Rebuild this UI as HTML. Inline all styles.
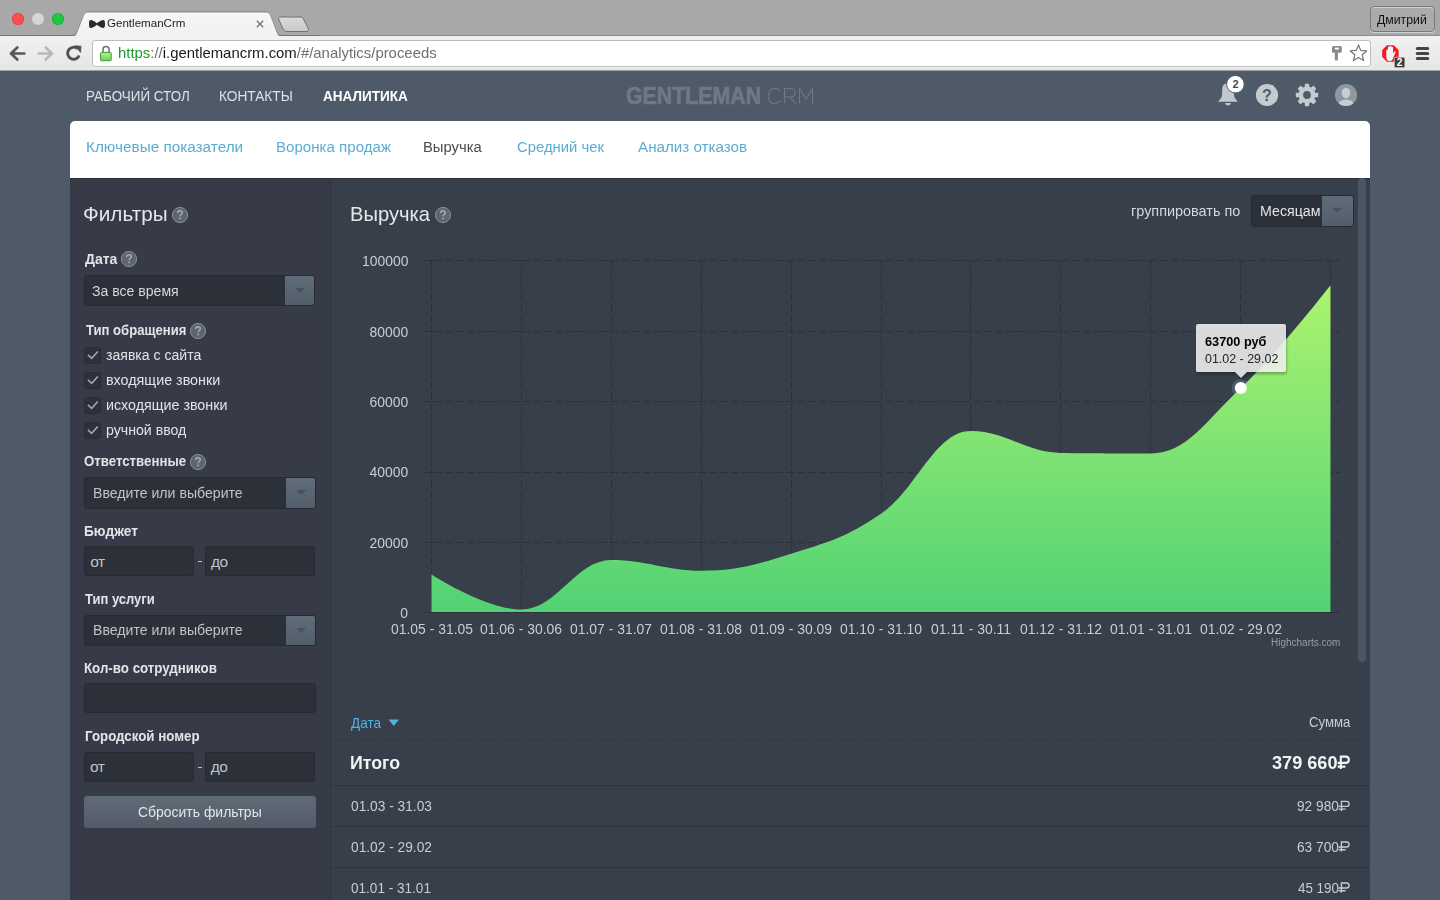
<!DOCTYPE html>
<html><head><meta charset="utf-8"><title>GentlemanCrm</title>
<style>
*{margin:0;padding:0;box-sizing:border-box}
html,body{width:1440px;height:900px;overflow:hidden;background:#4e5a68;font-family:"Liberation Sans",sans-serif}
.t{position:absolute;white-space:nowrap;line-height:1}
.b{position:absolute}
.inp{position:absolute;background:#2b3039;border:1px solid #262b33;border-radius:3px}
.ddb{position:absolute;top:0;right:0;width:29px;height:100%;background:linear-gradient(#616c79,#535e6b);border-radius:0 2px 2px 0}
.ddb:after{content:"";position:absolute;left:9.5px;top:12px;border-left:5px solid transparent;border-right:5px solid transparent;border-top:5.5px solid #48505b}
.q{position:absolute;width:16px;height:16px;border-radius:50%;background:#6b727c;border:1px solid #7d838c}
.q:after{content:"?";position:absolute;left:0;top:1px;width:14px;text-align:center;font:bold 11px/1 "Liberation Sans",sans-serif;color:#aeb2b8}
.cb{position:absolute;left:84px;width:16.5px;height:16.5px;background:#2c313a;border:1px solid #292e36;border-radius:3px}
.row{position:absolute;left:331px;width:1039px;height:1px;background:#30363f}
</style></head><body>
<div class="b" style="left:0;top:0;width:1440px;height:36px;background:#a8a8a8;border-bottom:1px solid #8c8c8c"></div>
<div class="b" style="left:0;top:36px;width:1440px;height:35px;background:linear-gradient(#f1f1f1,#e6e6e6);border-bottom:1px solid #a3a3a3"></div>
<svg class="b" style="left:0;top:0" width="320" height="37">
<defs><linearGradient id="tg" x1="0" y1="0" x2="0" y2="1"><stop offset="0" stop-color="#f6f6f6"/><stop offset="1" stop-color="#f1f1f1"/></linearGradient>
<linearGradient id="ng" x1="0" y1="0" x2="0" y2="1"><stop offset="0" stop-color="#dadada"/><stop offset="1" stop-color="#c9c9c9"/></linearGradient></defs>
<path d="M0,35.5 L71,35.5 C75,35.5 76,34 77,32.5 L84,15 C85,13 86,12 89,12 L265,12 C268,12 269,13 270,15 L277,32.5 C278,34 279,35.5 283,35.5 L320,35.5" fill="none" stroke="#767676" stroke-width="1"/>
<path d="M71,37 C75,37 76,35 77,33 L84,15 C85,13 86,12.5 89,12.5 L265,12.5 C268,12.5 269,13 270,15 L277,33 C278,35 279,37 283,37 Z" fill="url(#tg)"/>

<path d="M280.5,17 L300,17 C302,17 303,18 304,20 L308,28 C309,30.5 308,31.5 306,31.5 L287,31.5 C285,31.5 284,30.5 283,29 L279,20 C278,18 279,17 280.5,17 Z" fill="url(#ng)" stroke="#707070" stroke-width="1"/>
<g fill="#2a2a2a"><path d="M97,23.2 C95,21.6 92.3,20 90.6,20 C89.3,20 89,22 89,24 C89,26 89.3,28 90.6,28 C92.3,28 95,26.4 97,24.8 Z M97,23.2 C99,21.6 101.7,20 103.4,20 C104.7,20 105,22 105,24 C105,26 104.7,28 103.4,28 C101.7,28 99,26.4 97,24.8 Z"/></g>
<path d="M256.8,20.8 L263.2,27.2 M263.2,20.8 L256.8,27.2" stroke="#707070" stroke-width="1.3"/>
</svg>
<div class="b" style="left:12px;top:13px;width:12px;height:12px;border-radius:50%;background:#fc4f51;box-shadow:inset 0 0 0 0.6px #e0393c"></div>
<div class="b" style="left:32px;top:13px;width:12px;height:12px;border-radius:50%;background:#d6d6d6;box-shadow:inset 0 0 0 0.6px #c8c8c8"></div>
<div class="b" style="left:52px;top:13px;width:12px;height:12px;border-radius:50%;background:#1ec744;box-shadow:inset 0 0 0 0.6px #19aa36"></div>
<svg class="b" style="left:0;top:36px" width="120" height="35">
<path d="M11,17.5 L24.3,17.5 M17.3,11.5 L11,17.5 L17.3,23.5" fill="none" stroke="#585858" stroke-width="2.7" stroke-linecap="round" stroke-linejoin="round"/>
<path d="M38.8,17.5 L52,17.5 M45.7,11.5 L52,17.5 L45.7,23.5" fill="none" stroke="#b9b9b9" stroke-width="2.7" stroke-linecap="round" stroke-linejoin="round"/>
<path d="M79.2,19.5 A6,6 0 1 1 77.5,12.6" fill="none" stroke="#4f4f4f" stroke-width="2.8"/>
<path d="M75,9.8 L81,10.2 L80.6,16.4 Z" fill="#4f4f4f" stroke="#4f4f4f" stroke-width="0.8" stroke-linejoin="round"/>
</svg>
<div class="b" style="left:92px;top:40px;width:1279px;height:27px;background:#fff;border:1px solid #bdbdbd;border-radius:3px;box-shadow:0 1px 0 rgba(255,255,255,0.6)"></div>
<svg class="b" style="left:98px;top:44px" width="18" height="20">
<defs><linearGradient id="lg" x1="0" y1="0" x2="0" y2="1"><stop offset="0" stop-color="#b2f09a"/><stop offset="1" stop-color="#6fd05a"/></linearGradient></defs>
<path d="M5,8.5 L5,5.6 A3,3 0 0 1 11,5.6 L11,8.5" fill="none" stroke="#6f6f6f" stroke-width="1.5"/>
<rect x="2.6" y="8.4" width="10.6" height="8.3" rx="0.8" fill="url(#lg)" stroke="#3c9a30" stroke-width="1"/>
</svg>
<div class="t" style="left:118.4px;top:46.0px;font-size:14.5px;font-weight:400;color:#1a1a1a;transform:scaleX(1.0269);transform-origin:0 0;"><span style="color:#1c9a2a">https</span><span style="color:#6f6f6f">://</span>i.gentlemancrm.com<span style="color:#6f6f6f">/#/analytics/proceeds</span></div>
<svg class="b" style="left:1325px;top:40px" width="50" height="28">
<rect x="7" y="6" width="9.8" height="6.8" rx="1.6" fill="#8a8a8a"/><rect x="9.9" y="7.6" width="4" height="1.9" fill="#fff"/>
<rect x="9.8" y="12" width="3.1" height="8.6" rx="1" fill="#8a8a8a"/>
<polygon points="33.50,5.00 35.79,10.44 41.68,10.94 37.21,14.81 38.55,20.56 33.50,17.50 28.45,20.56 29.79,14.81 25.32,10.94 31.21,10.44" fill="#fff" stroke="#777" stroke-width="1.2" stroke-linejoin="round"/>
</svg>
<svg class="b" style="left:1375px;top:40px" width="65" height="30">
<polygon points="23.62,16.91 18.81,21.72 11.99,21.72 7.18,16.91 7.18,10.09 11.99,5.28 18.81,5.28 23.62,10.09" fill="#ee1c25"/>
<path d="M11.3,17 L11.3,10.5 C11.3,9.3 13,9.3 13,10.5 L13,7.3 C13,6.1 14.7,6.1 14.7,7.3 L14.7,6.6 C14.7,5.4 16.4,5.4 16.4,6.6 L16.4,7.6 C16.4,6.4 18.1,6.4 18.1,7.6 L18.1,13.5 L19.3,11.8 C20,10.9 21,11.5 20.5,12.5 L18,18.5 C17.2,20.5 16,21 14.6,21 C12.5,21 11.3,19.5 11.3,17 Z" fill="#f3f3f3"/>
<rect x="19.3" y="17.3" width="10.6" height="10.4" rx="1.5" fill="#3d3d3d" stroke="#eee" stroke-width="0.6"/>
<text x="24.6" y="26" font-family="Liberation Sans" font-weight="bold" font-size="10" fill="#fff" text-anchor="middle">2</text>
<g fill="#444"><rect x="40.8" y="7" width="13.4" height="3" rx="1.5"/><rect x="40.8" y="12" width="13.4" height="3" rx="1.5"/><rect x="40.8" y="17" width="13.4" height="3" rx="1.5"/></g>
</svg>
<div class="b" style="left:1370px;top:6px;width:65px;height:26px;border:1px solid #7a7a7a;border-radius:4px;background:#aaaaaa;box-shadow:inset 0 1px 0 rgba(255,255,255,0.45),0 1px 0 rgba(255,255,255,0.45)"></div>
<div class="t" style="left:106.5px;top:18.2px;font-size:11.8px;font-weight:400;color:#1e1e1e;transform:scaleX(0.9810);transform-origin:0 0;">GentlemanCrm</div>
<div class="t" style="left:1377.0px;top:13.5px;font-size:12.4px;font-weight:400;color:#111;transform:scaleX(0.9900);transform-origin:0 0;">Дмитрий</div>
<div class="t" style="left:85.8px;top:88.0px;font-size:15.5px;font-weight:400;color:#dde1e6;transform:scaleX(0.8661);transform-origin:0 0;">РАБОЧИЙ СТОЛ</div>
<div class="t" style="left:218.6px;top:88.0px;font-size:15.5px;font-weight:400;color:#dde1e6;transform:scaleX(0.8817);transform-origin:0 0;">КОНТАКТЫ</div>
<div class="t" style="left:323.0px;top:88.0px;font-size:15.5px;font-weight:700;color:#ffffff;transform:scaleX(0.8742);transform-origin:0 0;">АНАЛИТИКА</div>
<div class="t" style="left:625.8px;top:84.5px;font-size:23px;font-weight:700;color:#6e7986;transform:scaleX(0.9280);transform-origin:0 0;-webkit-text-stroke:0.7px #6e7986;">GENTLEMAN</div>
<svg class="b" style="left:765px;top:85px" width="52" height="22">
<g fill="none" stroke="#6e7986" stroke-width="1.1">
<path d="M15,5.8 C13.5,4 11.5,3.4 9.5,3.4 C5.5,3.4 3.5,6.8 3.5,10.9 C3.5,15.2 5.5,18.5 9.5,18.5 C11.5,18.5 13.5,18 15,16.2"/>
<path d="M19.5,18.6 L19.5,3.5 L25.5,3.5 C28.5,3.5 30,5.4 30,7.8 C30,10.2 28.5,12 25.5,12 L19.5,12 M25.5,12 L30.5,18.6"/>
<path d="M34.5,18.6 L34.5,3.5 L41,14.3 L47.5,3.5 L47.5,18.6"/>
</g></svg>
<svg class="b" style="left:1210px;top:74px" width="150" height="40">
<g fill="#c3c8ce">
<path d="M8.4,27.8 C8.4,26.3 11.8,25 12,21 L12.3,14.5 C12.5,11 15,9.3 18,9.3 C21,9.3 23.5,11 23.7,14.5 L24,21 C24.2,25 27.6,26.3 27.6,27.8 Z"/>
<path d="M15.3,29 L20.7,29 C20.7,30.6 19.6,31.3 18,31.3 C16.4,31.3 15.3,30.6 15.3,29 Z"/>
</g>
<circle cx="25.4" cy="10.2" r="8.8" fill="#fff" stroke="#4e5a68" stroke-width="1"/>
<text x="25.5" y="14.1" font-family="Liberation Sans" font-weight="bold" font-size="11" fill="#3f4a57" text-anchor="middle">2</text>
<circle cx="57" cy="21" r="11.1" fill="#c5cad0"/>
<text x="57" y="27" font-family="Liberation Sans" font-weight="bold" font-size="16" fill="#4e5a68" text-anchor="middle">?</text>
<g transform="translate(97,21)">
<g fill="#c5cad0">
<circle r="8.5"/>
<rect x="-2.2" y="-11.2" width="4.4" height="22.4" rx="0.7"/>
<rect x="-2.2" y="-11.2" width="4.4" height="22.4" rx="0.7" transform="rotate(45)"/>
<rect x="-2.2" y="-11.2" width="4.4" height="22.4" rx="0.7" transform="rotate(90)"/>
<rect x="-2.2" y="-11.2" width="4.4" height="22.4" rx="0.7" transform="rotate(135)"/>
</g>
<circle r="3.9" fill="#4e5a68"/>
</g>
<circle cx="136" cy="21" r="11.1" fill="#8f97a1"/>
<clipPath id="uc"><circle cx="136" cy="21" r="11.1"/></clipPath>
<g clip-path="url(#uc)" fill="#c8ccd2"><ellipse cx="136" cy="19" rx="4.3" ry="5.3"/><ellipse cx="136" cy="31.6" rx="8.3" ry="6"/></g>
</svg>
<div class="b" style="left:70px;top:121px;width:1300px;height:57px;background:#fff;border-radius:5px 5px 0 0"></div>
<div class="t" style="left:85.7px;top:138.6px;font-size:15.5px;font-weight:400;color:#5aacd3;transform:scaleX(0.9879);transform-origin:0 0;">Ключевые показатели</div>
<div class="t" style="left:275.5px;top:138.6px;font-size:15.5px;font-weight:400;color:#5aacd3;transform:scaleX(0.9735);transform-origin:0 0;">Воронка продаж</div>
<div class="t" style="left:423.3px;top:138.6px;font-size:15.5px;font-weight:400;color:#4b4b4b;transform:scaleX(0.9549);transform-origin:0 0;">Выручка</div>
<div class="t" style="left:516.5px;top:138.6px;font-size:15.5px;font-weight:400;color:#5aacd3;transform:scaleX(0.9583);transform-origin:0 0;">Средний чек</div>
<div class="t" style="left:637.5px;top:138.6px;font-size:15.5px;font-weight:400;color:#5aacd3;transform:scaleX(0.9797);transform-origin:0 0;">Анализ отказов</div>
<div class="b" style="left:70px;top:178px;width:261px;height:722px;background:#363b47"></div>
<div class="b" style="left:330px;top:178px;width:1px;height:722px;background:#2f343d"></div>
<div class="b" style="left:331px;top:178px;width:1039px;height:722px;background:#363f4a"></div>
<div class="b" style="left:70px;top:178px;width:1300px;height:1px;background:#2a2f37"></div>
<div class="t" style="left:83.0px;top:203.7px;font-size:20.7px;font-weight:400;color:#e4e6e9;transform:scaleX(1.0024);transform-origin:0 0;">Фильтры</div>
<svg class="b" style="left:170.9px;top:205.9px" width="18" height="18"><circle cx="9" cy="9" r="7.6" fill="#5e656f" stroke="#8a8f96" stroke-width="1"/><path d="M6.7,7.1 C6.7,5.6 7.7,4.8 9,4.8 C10.3,4.8 11.3,5.6 11.3,6.8 C11.3,8.2 9.2,8.5 9.2,10.3" fill="none" stroke="#a7abb0" stroke-width="1.5"/><rect x="8.35" y="11.5" width="1.7" height="1.7" fill="#a7abb0"/></svg>
<div class="t" style="left:84.9px;top:251.5px;font-size:14.8px;font-weight:700;color:#e2e4e7;transform:scaleX(0.9441);transform-origin:0 0;">Дата</div>
<svg class="b" style="left:120.0px;top:250.1px" width="18" height="18"><circle cx="9" cy="9" r="7.6" fill="#5e656f" stroke="#8a8f96" stroke-width="1"/><path d="M6.7,7.1 C6.7,5.6 7.7,4.8 9,4.8 C10.3,4.8 11.3,5.6 11.3,6.8 C11.3,8.2 9.2,8.5 9.2,10.3" fill="none" stroke="#a7abb0" stroke-width="1.5"/><rect x="8.35" y="11.5" width="1.7" height="1.7" fill="#a7abb0"/></svg>
<div class="inp" style="left:84px;top:275px;width:231px;height:31px"><div class="ddb"></div></div>
<div class="t" style="left:92.1px;top:283.2px;font-size:15.5px;font-weight:400;color:#d5d8dc;transform:scaleX(0.9074);transform-origin:0 0;">За все время</div>
<div class="t" style="left:85.8px;top:323.3px;font-size:14.8px;font-weight:700;color:#e2e4e7;transform:scaleX(0.8850);transform-origin:0 0;">Тип обращения</div>
<svg class="b" style="left:189.0px;top:321.8px" width="18" height="18"><circle cx="9" cy="9" r="7.6" fill="#5e656f" stroke="#8a8f96" stroke-width="1"/><path d="M6.7,7.1 C6.7,5.6 7.7,4.8 9,4.8 C10.3,4.8 11.3,5.6 11.3,6.8 C11.3,8.2 9.2,8.5 9.2,10.3" fill="none" stroke="#a7abb0" stroke-width="1.5"/><rect x="8.35" y="11.5" width="1.7" height="1.7" fill="#a7abb0"/></svg>
<div class="cb" style="top:347px"></div>
<svg class="b" style="left:84px;top:347px" width="17" height="16"><path d="M3.9,7.8 L7.7,11.3 L13.8,4.5" fill="none" stroke="#a0a4a9" stroke-width="1.7"/></svg>
<div class="t" style="left:105.8px;top:346.9px;font-size:15.5px;font-weight:400;color:#e2e4e7;transform:scaleX(0.9077);transform-origin:0 0;">заявка с сайта</div>
<div class="cb" style="top:372px"></div>
<svg class="b" style="left:84px;top:372px" width="17" height="16"><path d="M3.9,7.8 L7.7,11.3 L13.8,4.5" fill="none" stroke="#a0a4a9" stroke-width="1.7"/></svg>
<div class="t" style="left:105.8px;top:371.9px;font-size:15.5px;font-weight:400;color:#e2e4e7;transform:scaleX(0.9238);transform-origin:0 0;">входящие звонки</div>
<div class="cb" style="top:397px"></div>
<svg class="b" style="left:84px;top:397px" width="17" height="16"><path d="M3.9,7.8 L7.7,11.3 L13.8,4.5" fill="none" stroke="#a0a4a9" stroke-width="1.7"/></svg>
<div class="t" style="left:105.8px;top:396.9px;font-size:15.5px;font-weight:400;color:#e2e4e7;transform:scaleX(0.9208);transform-origin:0 0;">исходящие звонки</div>
<div class="cb" style="top:422px"></div>
<svg class="b" style="left:84px;top:422px" width="17" height="16"><path d="M3.9,7.8 L7.7,11.3 L13.8,4.5" fill="none" stroke="#a0a4a9" stroke-width="1.7"/></svg>
<div class="t" style="left:105.8px;top:421.9px;font-size:15.5px;font-weight:400;color:#e2e4e7;transform:scaleX(0.9126);transform-origin:0 0;">ручной ввод</div>
<div class="t" style="left:84.0px;top:453.9px;font-size:14.8px;font-weight:700;color:#e2e4e7;transform:scaleX(0.8947);transform-origin:0 0;">Ответственные</div>
<svg class="b" style="left:188.8px;top:452.8px" width="18" height="18"><circle cx="9" cy="9" r="7.6" fill="#5e656f" stroke="#8a8f96" stroke-width="1"/><path d="M6.7,7.1 C6.7,5.6 7.7,4.8 9,4.8 C10.3,4.8 11.3,5.6 11.3,6.8 C11.3,8.2 9.2,8.5 9.2,10.3" fill="none" stroke="#a7abb0" stroke-width="1.5"/><rect x="8.35" y="11.5" width="1.7" height="1.7" fill="#a7abb0"/></svg>
<div class="inp" style="left:84px;top:477px;width:232px;height:31.5px"><div class="ddb"></div></div>
<div class="t" style="left:92.7px;top:485.4px;font-size:15.5px;font-weight:400;color:#c0c4c9;transform:scaleX(0.9104);transform-origin:0 0;">Введите или выберите</div>
<div class="t" style="left:84.0px;top:524.0px;font-size:14.8px;font-weight:700;color:#e2e4e7;transform:scaleX(0.9281);transform-origin:0 0;">Бюджет</div>
<div class="inp" style="left:84px;top:546px;width:110px;height:30px"></div>
<div class="inp" style="left:205px;top:546px;width:110px;height:30px"></div>
<div class="t" style="left:90.2px;top:553.9px;font-size:15.5px;font-weight:400;color:#c0c4ca;letter-spacing:-0.5px;">от</div>
<div class="t" style="left:210.9px;top:553.9px;font-size:15.5px;font-weight:400;color:#c0c4ca;letter-spacing:-0.5px;">до</div>
<div class="b" style="left:198px;top:561px;width:4px;height:1.3px;background:#b9bdc3"></div>
<div class="t" style="left:84.9px;top:591.5px;font-size:14.8px;font-weight:700;color:#e2e4e7;transform:scaleX(0.8785);transform-origin:0 0;">Тип услуги</div>
<div class="inp" style="left:84px;top:614.5px;width:232px;height:31px"><div class="ddb"></div></div>
<div class="t" style="left:92.7px;top:622.3px;font-size:15.5px;font-weight:400;color:#c0c4c9;transform:scaleX(0.9104);transform-origin:0 0;">Введите или выберите</div>
<div class="t" style="left:84.0px;top:660.9px;font-size:14.8px;font-weight:700;color:#e2e4e7;transform:scaleX(0.8993);transform-origin:0 0;">Кол-во сотрудников</div>
<div class="inp" style="left:84px;top:683px;width:232px;height:30px"></div>
<div class="t" style="left:84.7px;top:728.6px;font-size:14.8px;font-weight:700;color:#e2e4e7;transform:scaleX(0.8992);transform-origin:0 0;">Городской номер</div>
<div class="inp" style="left:84px;top:751.5px;width:110px;height:30px"></div>
<div class="inp" style="left:205px;top:751.5px;width:110px;height:30px"></div>
<div class="t" style="left:90.0px;top:759.4px;font-size:15.5px;font-weight:400;color:#c0c4ca;letter-spacing:-0.5px;">от</div>
<div class="t" style="left:210.7px;top:759.4px;font-size:15.5px;font-weight:400;color:#c0c4ca;letter-spacing:-0.5px;">до</div>
<div class="b" style="left:198px;top:766.5px;width:4px;height:1.3px;background:#b9bdc3"></div>
<div class="b" style="left:84px;top:796px;width:232px;height:32px;border-radius:3px;background:linear-gradient(#606b78,#525c68)"></div>
<div class="t" style="left:137.9px;top:804.8px;font-size:14.5px;font-weight:400;color:#e3e6e9;transform:scaleX(0.9622);transform-origin:0 0;">Сбросить фильтры</div>
<div class="t" style="left:350.1px;top:203.9px;font-size:20.7px;font-weight:400;color:#e4e6e9;transform:scaleX(0.9750);transform-origin:0 0;">Выручка</div>
<svg class="b" style="left:433.8px;top:206.4px" width="18" height="18"><circle cx="9" cy="9" r="7.6" fill="#5e656f" stroke="#8a8f96" stroke-width="1"/><path d="M6.7,7.1 C6.7,5.6 7.7,4.8 9,4.8 C10.3,4.8 11.3,5.6 11.3,6.8 C11.3,8.2 9.2,8.5 9.2,10.3" fill="none" stroke="#a7abb0" stroke-width="1.5"/><rect x="8.35" y="11.5" width="1.7" height="1.7" fill="#a7abb0"/></svg>
<div class="t" style="left:1131.0px;top:203.7px;font-size:14.5px;font-weight:400;color:#d5d8dc;transform:scaleX(0.9954);transform-origin:0 0;">группировать по</div>
<div class="inp" style="left:1251px;top:195px;width:103px;height:32px"><div class="ddb" style="width:31px"><div></div></div></div>
<div class="t" style="left:1259.6px;top:203.4px;font-size:15.5px;font-weight:400;color:#e2e4e7;transform:scaleX(0.9172);transform-origin:0 0;">Месяцам</div>
<div class="b" style="left:1358px;top:178px;width:8px;height:484px;border-radius:4px;background:#4b5563"></div>
<svg class="b" style="left:0;top:0" width="1440" height="900">
<defs><linearGradient id="ag" gradientUnits="userSpaceOnUse" x1="0" y1="285" x2="0" y2="612"><stop offset="0" stop-color="#acf46f"/><stop offset="1" stop-color="#52d275"/></linearGradient></defs>
<path d="M423,260.5 L1340,260.5" stroke="#2c323b" stroke-width="1" stroke-dasharray="8,3"/><path d="M423,331.5 L1340,331.5" stroke="#2c323b" stroke-width="1" stroke-dasharray="8,3"/><path d="M423,401.5 L1340,401.5" stroke="#2c323b" stroke-width="1" stroke-dasharray="8,3"/><path d="M423,472.5 L1340,472.5" stroke="#2c323b" stroke-width="1" stroke-dasharray="8,3"/><path d="M423,542.5 L1340,542.5" stroke="#2c323b" stroke-width="1" stroke-dasharray="8,3"/><path d="M431.5,260 L431.5,612" stroke="#2c323b" stroke-width="1" stroke-dasharray="8,3"/><path d="M521.5,260 L521.5,612" stroke="#2c323b" stroke-width="1" stroke-dasharray="8,3"/><path d="M611.5,260 L611.5,612" stroke="#2c323b" stroke-width="1" stroke-dasharray="8,3"/><path d="M701.5,260 L701.5,612" stroke="#2c323b" stroke-width="1" stroke-dasharray="8,3"/><path d="M791.5,260 L791.5,612" stroke="#2c323b" stroke-width="1" stroke-dasharray="8,3"/><path d="M881.5,260 L881.5,612" stroke="#2c323b" stroke-width="1" stroke-dasharray="8,3"/><path d="M970.5,260 L970.5,612" stroke="#2c323b" stroke-width="1" stroke-dasharray="8,3"/><path d="M1060.5,260 L1060.5,612" stroke="#2c323b" stroke-width="1" stroke-dasharray="8,3"/><path d="M1150.5,260 L1150.5,612" stroke="#2c323b" stroke-width="1" stroke-dasharray="8,3"/><path d="M1240.5,260 L1240.5,612" stroke="#2c323b" stroke-width="1" stroke-dasharray="8,3"/><path d="M1330.5,260 L1330.5,612" stroke="#2c323b" stroke-width="1" stroke-dasharray="8,3"/>
<circle cx="1240.6" cy="388" r="9" fill="#4a5b72"/>
<path d="M431.50,574.50 C431.50,574.50 485.44,609.50 521.40,609.50 C557.36,609.50 575.34,560.00 611.30,560.00 C647.26,560.00 665.24,570.75 701.20,570.75 C737.16,570.75 755.14,565.15 791.10,553.75 C827.06,542.35 845.04,538.32 881.00,513.75 C916.96,489.18 934.94,430.90 970.90,430.90 C1006.86,430.90 1024.84,452.57 1060.80,453.00 C1096.76,453.43 1114.74,453.43 1150.70,453.43 C1186.66,453.43 1204.64,421.92 1240.60,388.28 C1276.56,354.63 1330.50,285.21 1330.50,285.21 L1330.50,612.5 L431.50,612.5 Z" fill="url(#ag)"/>
<path d="M423,612.5 L1340,612.5" stroke="#2c323b" stroke-width="1"/>
</svg>
<div class="t" style="right:1031.7px;top:254.2px;font-size:14.5px;color:#c9cdd2;transform:scaleX(0.96);transform-origin:100% 0">100000</div>
<div class="t" style="right:1031.7px;top:324.6px;font-size:14.5px;color:#c9cdd2;transform:scaleX(0.96);transform-origin:100% 0">80000</div>
<div class="t" style="right:1031.7px;top:395.0px;font-size:14.5px;color:#c9cdd2;transform:scaleX(0.96);transform-origin:100% 0">60000</div>
<div class="t" style="right:1031.7px;top:465.4px;font-size:14.5px;color:#c9cdd2;transform:scaleX(0.96);transform-origin:100% 0">40000</div>
<div class="t" style="right:1031.7px;top:535.8px;font-size:14.5px;color:#c9cdd2;transform:scaleX(0.96);transform-origin:100% 0">20000</div>
<div class="t" style="right:1031.7px;top:606.2px;font-size:14.5px;color:#c9cdd2;transform:scaleX(0.96);transform-origin:100% 0">0</div>
<div class="t" style="left:371.5px;width:120px;text-align:center;top:621.6px;font-size:14.5px;color:#c9cdd2;transform:scaleX(0.959);transform-origin:50% 0">01.05 - 31.05</div>
<div class="t" style="left:461.4px;width:120px;text-align:center;top:621.6px;font-size:14.5px;color:#c9cdd2;transform:scaleX(0.959);transform-origin:50% 0">01.06 - 30.06</div>
<div class="t" style="left:551.3px;width:120px;text-align:center;top:621.6px;font-size:14.5px;color:#c9cdd2;transform:scaleX(0.959);transform-origin:50% 0">01.07 - 31.07</div>
<div class="t" style="left:641.2px;width:120px;text-align:center;top:621.6px;font-size:14.5px;color:#c9cdd2;transform:scaleX(0.959);transform-origin:50% 0">01.08 - 31.08</div>
<div class="t" style="left:731.1px;width:120px;text-align:center;top:621.6px;font-size:14.5px;color:#c9cdd2;transform:scaleX(0.959);transform-origin:50% 0">01.09 - 30.09</div>
<div class="t" style="left:821.0px;width:120px;text-align:center;top:621.6px;font-size:14.5px;color:#c9cdd2;transform:scaleX(0.959);transform-origin:50% 0">01.10 - 31.10</div>
<div class="t" style="left:910.9px;width:120px;text-align:center;top:621.6px;font-size:14.5px;color:#c9cdd2;transform:scaleX(0.959);transform-origin:50% 0">01.11 - 30.11</div>
<div class="t" style="left:1000.8px;width:120px;text-align:center;top:621.6px;font-size:14.5px;color:#c9cdd2;transform:scaleX(0.959);transform-origin:50% 0">01.12 - 31.12</div>
<div class="t" style="left:1090.7px;width:120px;text-align:center;top:621.6px;font-size:14.5px;color:#c9cdd2;transform:scaleX(0.959);transform-origin:50% 0">01.01 - 31.01</div>
<div class="t" style="left:1180.6px;width:120px;text-align:center;top:621.6px;font-size:14.5px;color:#c9cdd2;transform:scaleX(0.959);transform-origin:50% 0">01.02 - 29.02</div>
<div class="t" style="left:1270.8px;top:637.8px;font-size:10px;font-weight:400;color:#979da5;transform:scaleX(0.9985);transform-origin:0 0;">Highcharts.com</div>
<svg class="b" style="left:1185px;top:315px" width="120" height="90">
<defs><filter id="sh" x="-20%" y="-20%" width="140%" height="160%"><feGaussianBlur stdDeviation="1.2"/></filter></defs>
<path d="M13,11 L99,11 Q101,11 101,13 L101,56 Q101,58 99,58 L62,58 L56,64 L50,58 L13,58 Q11,58 11,56 L11,13 Q11,11 13,11 Z" fill="rgba(0,0,0,0.25)" transform="translate(1,1.5)" filter="url(#sh)"/>
<path d="M13,9 L99,9 Q101,9 101,11 L101,56 Q101,57 99,57 L62,57 L56,63 L50,57 L13,57 Q11,57 11,56 L11,11 Q11,9 13,9 Z" fill="rgba(247,247,247,0.86)"/>
<circle cx="55.8" cy="73" r="6" fill="#fff"/>
</svg>
<div class="t" style="left:1204.5px;top:334.8px;font-size:13.4px;font-weight:700;color:#000000;transform:scaleX(0.9500);transform-origin:0 0;">63700 руб</div>
<div class="t" style="left:1204.5px;top:351.9px;font-size:13.4px;font-weight:400;color:#222222;transform:scaleX(0.9291);transform-origin:0 0;">01.02 - 29.02</div>
<div class="t" style="left:350.9px;top:715.5px;font-size:14.5px;font-weight:400;color:#4fb2e4;transform:scaleX(0.9344);transform-origin:0 0;">Дата</div>
<svg class="b" style="left:388px;top:719px" width="12" height="8"><path d="M0.5,0.5 L11,0.5 L5.75,7 Z" fill="#4fb2e4"/></svg>
<div class="t" style="left:1308.5px;top:715.2px;font-size:14.5px;font-weight:400;color:#c9cdd2;transform:scaleX(0.9089);transform-origin:0 0;">Сумма</div>
<div class="b" style="left:331px;top:739px;width:1039px;height:1px;background-image:linear-gradient(90deg,#2d333c 50%,transparent 50%);background-size:6px 1px"></div>
<div class="t" style="left:350.1px;top:752.9px;font-size:19px;font-weight:700;color:#f2f3f4;transform:scaleX(0.9346);transform-origin:0 0;">Итого</div>
<div class="row" style="top:785px"></div>
<div class="t" style="left:351.0px;top:799.1px;font-size:14.5px;font-weight:400;color:#c9cdd2;transform:scaleX(0.9471);transform-origin:0 0;">01.03 - 31.03</div>
<div class="row" style="top:826px"></div>
<div class="t" style="left:351.0px;top:839.7px;font-size:14.5px;font-weight:400;color:#c9cdd2;transform:scaleX(0.9471);transform-origin:0 0;">01.02 - 29.02</div>
<div class="row" style="top:867px"></div>
<div class="t" style="left:351.0px;top:880.7px;font-size:14.5px;font-weight:400;color:#c9cdd2;transform:scaleX(0.9353);transform-origin:0 0;">01.01 - 31.01</div>
<div class="t" style="left:1272.3px;top:753.1px;font-size:19px;font-weight:700;color:#f2f3f4;transform:scaleX(0.9537);transform-origin:0 0;">379 660</div>
<svg class="b" style="left:0;top:0" width="1440" height="900"><path d="M1340.80,769.10 L1340.80,756.65 L1345.91,756.65 A3.14,3.14 0 0 1 1345.91,762.92 L1337.70,762.92 M1337.70,766.67 L1345.39,766.67" fill="none" stroke="#f2f3f4" stroke-width="2.10"/></svg>
<div class="t" style="left:1297.1px;top:799.1px;font-size:14.5px;font-weight:400;color:#c9cdd2;transform:scaleX(0.9442);transform-origin:0 0;">92 980</div>
<svg class="b" style="left:0;top:0" width="1440" height="900"><path d="M1341.42,811.00 L1341.42,801.38 L1346.71,801.38 A2.52,2.52 0 0 1 1346.71,806.41 L1338.60,806.41 M1338.60,809.15 L1345.61,809.15" fill="none" stroke="#c9cdd2" stroke-width="1.35"/></svg>
<div class="t" style="left:1297.1px;top:839.7px;font-size:14.5px;font-weight:400;color:#c9cdd2;transform:scaleX(0.9442);transform-origin:0 0;">63 700</div>
<svg class="b" style="left:0;top:0" width="1440" height="900"><path d="M1341.42,851.60 L1341.42,841.98 L1346.71,841.98 A2.52,2.52 0 0 1 1346.71,847.01 L1338.60,847.01 M1338.60,849.75 L1345.61,849.75" fill="none" stroke="#c9cdd2" stroke-width="1.35"/></svg>
<div class="t" style="left:1298.0px;top:880.7px;font-size:14.5px;font-weight:400;color:#c9cdd2;transform:scaleX(0.9227);transform-origin:0 0;">45 190</div>
<svg class="b" style="left:0;top:0" width="1440" height="900"><path d="M1341.42,892.60 L1341.42,882.98 L1346.71,882.98 A2.52,2.52 0 0 1 1346.71,888.01 L1338.60,888.01 M1338.60,890.75 L1345.61,890.75" fill="none" stroke="#c9cdd2" stroke-width="1.35"/></svg>
</body></html>
